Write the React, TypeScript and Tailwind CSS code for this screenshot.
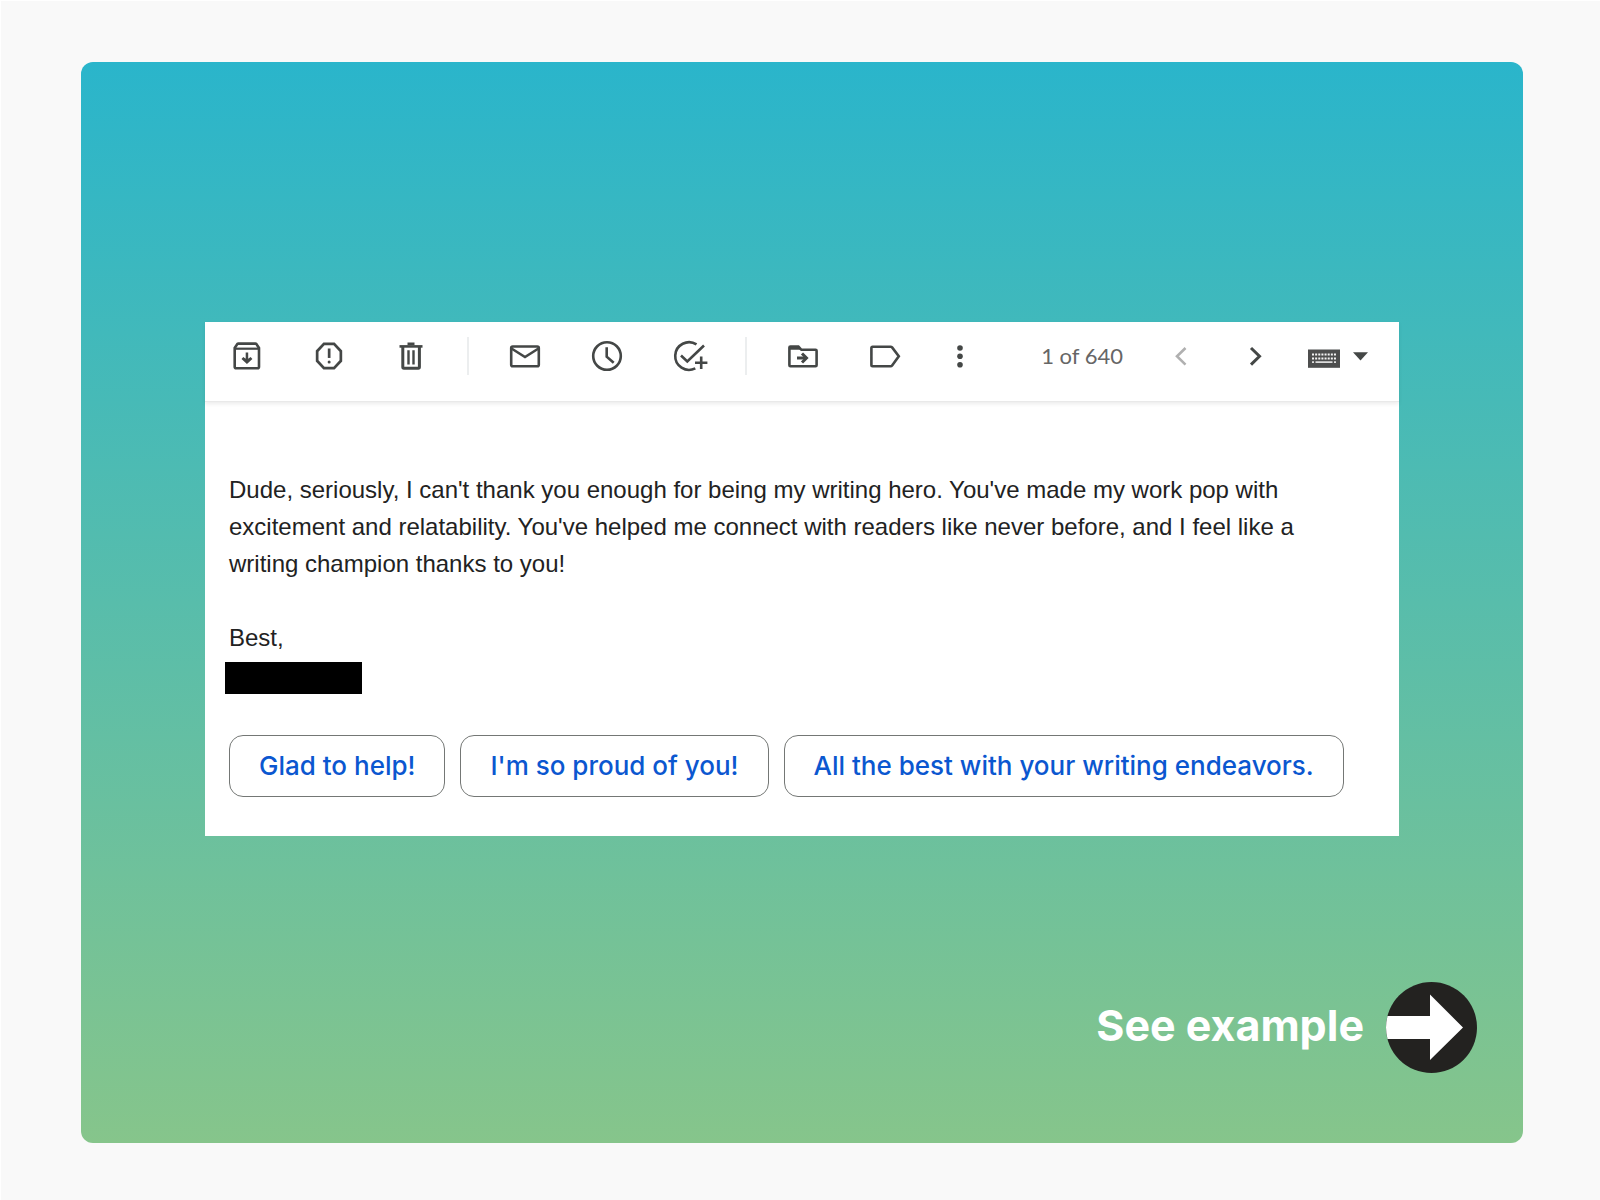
import type { ReactNode } from "react";

function IconButton({ label, className = "w-[82px]", children }: { label: string; className?: string; children: ReactNode }) {
  return (
    <button type="button" aria-label={label} className={`flex justify-center shrink-0 ${className}`}>
      <svg
        viewBox="0 0 36 36"
        className="size-9 overflow-visible"
        fill="none"
        stroke="currentColor"
        strokeWidth="2.6"
        aria-hidden="true"
      >
        {children}
      </svg>
    </button>
  );
}

function Divider() {
  return <div className="w-0.5 h-[38px] mx-[15px] shrink-0 bg-[#eceeef]" />;
}

const replies = ["Glad to help!", "I'm so proud of you!", "All the best with your writing endeavors."];

function Toolbar() {
  return (
    <div className="relative flex items-center h-20 pb-[11px] pl-px pr-[31px] text-[#444746] border-b border-[#e9e9e9] shadow-[0_2px_4px_rgba(0,0,0,0.08)]">
      <IconButton label="Archive">
        <path d="M5.7 10v18.700q0 1.500 1.500 1.500h21.300q1.500 0 1.500-1.500V10l-2.600-4q-.4-.4-1-.4H9.300q-.6 0-1 .4z" strokeWidth="2.600" />
        <path d="M5.500 10.700h24.600" strokeWidth="2.200" />
        <path
          d="M16.700 14.500h2.500v6.200l2.400-1.600 1.800 1.800-5.450 5.100-5.450-5.100 1.800-1.800 2.400 1.600z"
          fill="currentColor"
          stroke="none"
        />
      </IconButton>
      <IconButton label="Report spam">
        <g transform="scale(1.5)" fill="currentColor" stroke="none">
          <path d="M15.73 3H8.27L3.200 8.27v7.46L8.27 21h7.46L20.800 15.73V8.27L15.73 3zM19 14.9L15 19.200H9L5 14.900V9.100L9 4.800h6L19 9.100z" />
          <rect x="11.200" y="7" width="1.800" height="6.300" />
          <circle cx="12.100" cy="16" r="1" />
        </g>
      </IconButton>
      <IconButton label="Delete">
        <path d="M6.500 8.400h23" />
        <path d="M14.500 5.800h7" />
        <path d="M9.800 9v20q0 1.200 1.200 1.200h14.200q1.200 0 1.200-1.200V9" strokeWidth="3" />
        <path d="M15.500 12.200v14.300M20.500 12.200v14.300" strokeWidth="2.400" />
      </IconButton>
      <Divider />
      <IconButton label="Mark as unread">
        <rect x="4.200" y="8.500" width="27.600" height="19.800" rx="1.500" />
        <path d="M4.500 10.500L18 19l13.500-8.500" />
      </IconButton>
      <IconButton label="Snooze">
        <circle cx="18" cy="18" r="13.800" />
        <path d="M17.700 9.200v9.500l7 6" />
      </IconButton>
      <IconButton label="Add to tasks">
        <path d="M25.500 6.400A13.800 13.800 0 1 0 24.300 30.300" />
        <path d="M10 17.500l6.300 6L33 7.500" />
        <path d="M30.200 18.500v12.600M24 24.800h12.400" />
      </IconButton>
      <Divider />
      <IconButton label="Move to">
        <path d="M4.400 9.500q0-1 1-1h8l3 3.300h14.200q1 0 1 1v14.400q0 1-1 1H5.400q-1 0-1-1z" />
        <path d="M4.400 8.500h9l3 3.300H4.400z" fill="currentColor" stroke="none" />
        <path d="M12 20h8" strokeWidth="3" />
        <path d="M17 15.500l4.500 4.500-4.500 4.500" strokeWidth="3" />
      </IconButton>
      <IconButton label="Labels">
        <path d="M5.600 8.700h18q.9 0 1.500.7l6.700 8.900-6.700 9.100q-.6.800-1.500.8h-18q-1.200 0-1.200-1.200V9.900q0-1.200 1.200-1.200z" />
      </IconButton>
      <IconButton label="More" className="w-[68px]">
        <g fill="currentColor" stroke="none">
          <circle cx="18" cy="10" r="2.800" />
          <circle cx="18" cy="18.300" r="2.800" />
          <circle cx="18" cy="26.700" r="2.800" />
        </g>
      </IconButton>

      <span className="ml-auto mr-[21px] whitespace-nowrap font-['Lato',sans-serif] text-[22px] leading-7 text-[#666]">1 of 640</span>
      <IconButton label="Newer" className="w-[74px] text-[#b0b0b0]">
        <path d="M22.500 10L14 18.300l8.500 8.300" />
      </IconButton>
      <IconButton label="Older" className="w-[74px]">
        <path d="M14 10l8.500 8.300-8.500 8.300" strokeWidth="3" />
      </IconButton>
      <button type="button" aria-label="Select input tool" className="flex shrink-0 gap-[13px] pl-4">
        <svg viewBox="0 0 32 36" className="w-8 h-9" aria-hidden="true">
          <rect y="11.500" width="32" height="18.300" fill="#4d4e4e" />
          <path d="M4 16.500h24M4 20.500h24" stroke="#f4f4f4" strokeWidth="2.200" strokeDasharray="2 1.140" />
          <path d="M4 24.200h2M7.500 24.200h17M26 24.200h2" stroke="#ddd" strokeWidth="1.800" />
        </svg>
        <svg viewBox="0 0 15 36" className="w-[15px] h-9" fill="currentColor" aria-hidden="true">
          <path d="M0 14.200h15l-7.500 8.300z" />
        </svg>
      </button>
    </div>
  );
}

export default function App() {
  return (
    <main className="min-h-screen flex flex-col bg-[#f9f9f9] border-t border-l border-white pt-[61px] pb-[57px] pl-20 pr-[77px]">
      <section className="flex-1 flex flex-col rounded-xl bg-linear-to-b/srgb from-[#2ab5cb] to-[#86c58b] pt-[260px]">
        <article className="mx-[124px] bg-white">
          <Toolbar />
          <div className="px-6 pt-[69px] pb-[39px]">
            <div className="pr-12 font-['Liberation_Sans',Arial,sans-serif] text-2xl leading-[37px] text-[#222]">
              <p>
                Dude, seriously, I can't thank you enough for being my writing hero. You've made my work pop with
                excitement and relatability. You've helped me connect with readers like never before, and I feel like a
                writing champion thanks to you!
              </p>
              <p className="mt-[37px]">Best,</p>
            </div>
            <div className="mt-1.5 -ml-1 w-[137px] h-8 bg-black" />
            <div className="mt-[41px] flex flex-wrap gap-[15px]">
              {replies.map((reply) => (
                <button
                  key={reply}
                  type="button"
                  className="h-[62px] px-[29px] pb-0.5 rounded-[14px] border border-[#747775] font-['Inter',sans-serif] font-medium text-[26px] text-[#0b57d0]"
                >
                  {reply}
                </button>
              ))}
            </div>
          </div>
        </article>

        <a
          href="#example"
          className="mt-auto self-end flex items-center gap-[22px] mr-[46px] mb-[70px] font-['Inter',sans-serif] font-bold text-[43px] leading-[52px] text-white"
        >
          <span className="pb-1.5">See example</span>
          <svg viewBox="0 0 91 91" className="size-[91px]" aria-hidden="true">
            <circle cx="45.500" cy="45.500" r="45.500" fill="#232220" />
            <path d="M1.500 34H44V12.500L77 45.500 44 78V57H1.500Q-1.500 45.500 1.500 34z" fill="#fff" />
          </svg>
        </a>
      </section>
    </main>
  );
}
